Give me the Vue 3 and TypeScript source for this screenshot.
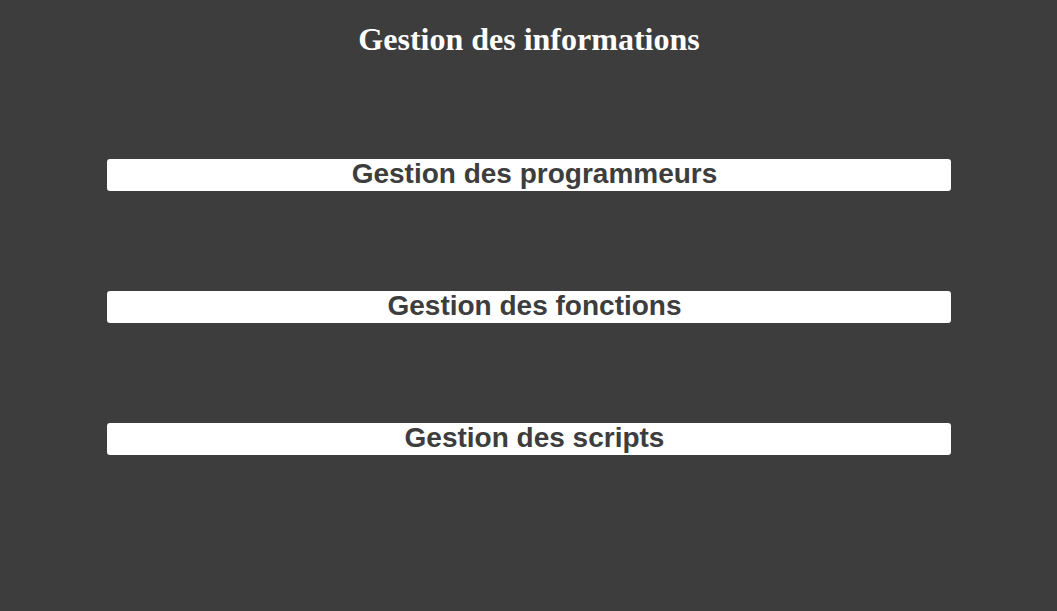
<script setup lang="ts">
const entries: string[] = [
  'Gestion des programmeurs',
  'Gestion des fonctions',
  'Gestion des scripts',
]
</script>

<template>
  <main class="page">
    <h1 class="title">Gestion des informations</h1>
    <nav class="menu">
      <button v-for="entry in entries" :key="entry" type="button" class="entry">{{ entry }}</button>
    </nav>
  </main>
</template>

<style scoped>
.page {
  margin-left: 1px;
  padding: 20px 10%;
}

.title {
  margin: 0;
  color: #fff;
  font: bold 32px/38px "Liberation Serif", "Times New Roman", serif;
  text-align: center;
}

.menu {
  display: flex;
  flex-direction: column;
  gap: 100px;
  margin-top: 101px;
}

.entry {
  width: 100%;
  height: 32px;
  padding: 0 0 2px 11px;
  border: 0;
  border-radius: 3px;
  background: #fff;
  color: #3d3d3d;
  font: bold 28px/30px "Liberation Sans", Arial, sans-serif;
  text-align: center;
  cursor: pointer;
}
</style>

<style>
body {
  margin: 0;
  background: #3d3d3d;
}
</style>
